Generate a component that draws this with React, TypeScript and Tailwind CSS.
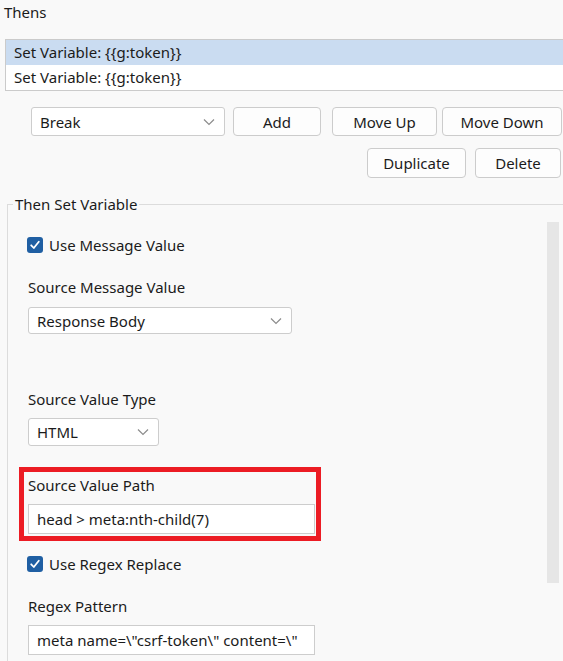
import React from "react";

const font = { fontFamily: '"Noto Sans", "Open Sans", sans-serif' };

function Chevron() {
  return (
    <svg width="12" height="8" viewBox="0 0 12 8" className="shrink-0">
      <polyline points="1,1.5 6,6.5 11,1.5" fill="none" stroke="#8c8c8c" strokeWidth="1.2" />
    </svg>
  );
}

function Select({ value, width, height }: { value: string; width: string; height: string }) {
  return (
    <div
      className={`flex items-center justify-between bg-white border border-[#cdcdcd] rounded-[3px] pl-[8px] pr-[9px] ${width} ${height}`}
    >
      <span className="text-[15px] leading-[20px] text-[#1b1b1b]">{value}</span>
      <Chevron />
    </div>
  );
}

function Button({ label, width, height }: { label: string; width: string; height: string }) {
  return (
    <div
      className={`flex items-center justify-center bg-[#fdfdfd] border border-[#cccccc] rounded-[4px] text-[15px] leading-[20px] text-[#1b1b1b] ${width} ${height}`}
    >
      {label}
    </div>
  );
}

function Check({ label }: { label: string }) {
  return (
    <div className="flex items-center h-[20px] -ml-[1px]">
      <div className="w-[16px] h-[16px] rounded-[3px] bg-[#1f5fa3] flex items-center justify-center">
        <svg width="12" height="12" viewBox="0 0 12 12">
          <polyline points="2.2,6.3 4.8,9 9.8,2.8" fill="none" stroke="#ffffff" strokeWidth="1.8" strokeLinecap="round" strokeLinejoin="round" />
        </svg>
      </div>
      <span className="ml-[6px] text-[15px] leading-[20px] text-[#1b1b1b]">{label}</span>
    </div>
  );
}

function Label({ text }: { text: string }) {
  return <div className="h-[20px] text-[15px] leading-[20px] text-[#1b1b1b]">{text}</div>;
}

function TextInput({ value }: { value: string }) {
  return (
    <div className="w-[287px] h-[30px] bg-white border border-[#cdcdcd] flex items-center pl-[8px] overflow-hidden whitespace-nowrap">
      <span className="text-[15px] leading-[20px] text-[#1b1b1b]">{value}</span>
    </div>
  );
}

export default function App() {
  return (
    <div className="w-[563px] h-[661px] overflow-hidden bg-[#f9f9f9]" style={font}>
      <div className="h-[24px] flex items-center pl-[4px] text-[15px] text-[#1b1b1b]">Thens</div>

      <div className="mt-[15px] ml-[5px] w-[600px] border border-[#cbcbcb] bg-white">
        <div className="h-[25px] bg-[#cadcf1] flex items-center pl-[8px] text-[15px] text-[#1b1b1b]">
          Set Variable: {"{{g:token}}"}
        </div>
        <div className="h-[25px] flex items-center pl-[8px] text-[15px] text-[#1b1b1b]">
          Set Variable: {"{{g:token}}"}
        </div>
      </div>

      <div className="mt-[16px] flex items-center pl-[31px]">
        <Select value="Break" width="w-[194px]" height="h-[29px]" />
        <div className="ml-[8px]">
          <Button label="Add" width="w-[88px]" height="h-[29px]" />
        </div>
        <div className="ml-[11px]">
          <Button label="Move Up" width="w-[105px]" height="h-[29px]" />
        </div>
        <div className="ml-[5px]">
          <Button label="Move Down" width="w-[120px]" height="h-[29px]" />
        </div>
      </div>

      <div className="mt-[12px] flex justify-end pr-[2px] gap-[9px]">
        <Button label="Duplicate" width="w-[99px]" height="h-[30px]" />
        <Button label="Delete" width="w-[86px]" height="h-[30px]" />
      </div>

      <fieldset className="mt-[16px] ml-[7px] w-[600px] h-[500px] border border-[#dcdcdc] p-0 m-0">
        <legend className="ml-[5px] px-[2px] h-[20px] text-[15px] leading-[20px] text-[#1b1b1b]">
          Then Set Variable
        </legend>
        <div className="flex">
          <div className="w-[539px] pl-[20px]">
            <div className="mt-[21px]">
              <Check label="Use Message Value" />
            </div>
            <div className="mt-[22px]">
              <Label text="Source Message Value" />
            </div>
            <div className="mt-[10px]">
              <Select value="Response Body" width="w-[264px]" height="h-[27px]" />
            </div>
            <div className="mt-[55px]">
              <Label text="Source Value Type" />
            </div>
            <div className="mt-[9px]">
              <Select value="HTML" width="w-[131px]" height="h-[28px]" />
            </div>
            <div className="mt-[21px] -ml-[9px] w-[302px] border-[5px] border-[#ec1c24] pt-[3px] pl-[4px] pb-[2px]">
              <Label text="Source Value Path" />
              <div className="mt-[9px]">
                <TextInput value="head > meta:nth-child(7)" />
              </div>
            </div>
            <div className="mt-[13px]">
              <Check label="Use Regex Replace" />
            </div>
            <div className="mt-[22px]">
              <Label text="Regex Pattern" />
            </div>
            <div className="mt-[9px]">
              <TextInput value={'meta name=\\"csrf-token\\" content=\\"'} />
            </div>
          </div>
          <div className="mt-[8px] w-[12px] h-[361px] bg-[#e6e6e6]" />
        </div>
      </fieldset>
    </div>
  );
}
